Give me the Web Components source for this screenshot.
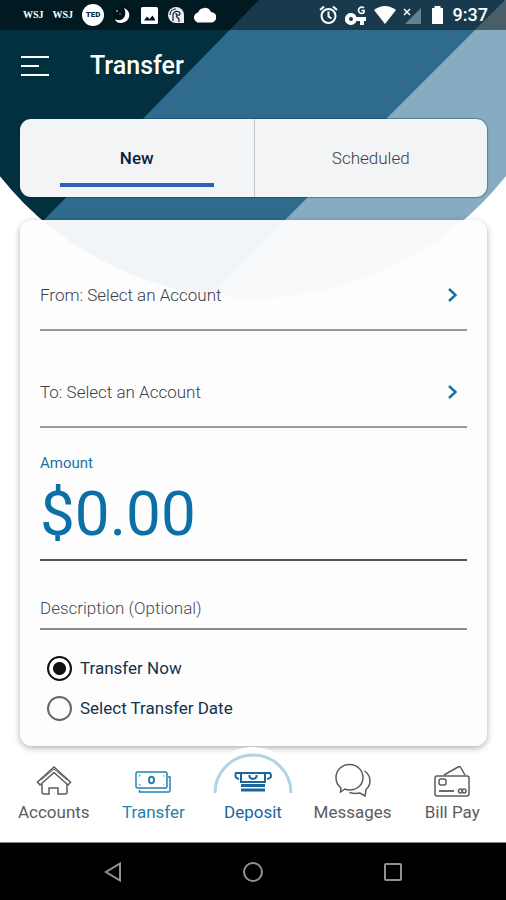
<!DOCTYPE html>
<html lang="en">
<head>
<meta charset="utf-8">
<meta name="viewport" content="width=device-width, initial-scale=1">
<title>Transfer</title>
<style>
html,body{margin:0;min-height:100%}
body{font-family:Roboto,"Liberation Sans",sans-serif;background:#fff;color:#12283c}
</style>
</head>
<body>
<bank-screen>
  <phone-status slot="status" time="9:37"></phone-status>
  <app-header slot="header">Transfer</app-header>
  <transfer-tabs></transfer-tabs>
  <transfer-card></transfer-card>
  <bank-nav slot="nav"></bank-nav>
  <system-nav slot="system"></system-nav>
</bank-screen>
<script>
const define = (name, html) => customElements.define(name, class extends HTMLElement {
  constructor() {
    super();
    const t = document.createElement('template');
    t.innerHTML = '<style>:host,*{box-sizing:border-box}button,input{font:inherit;color:inherit;margin:0;padding:0;border:0;background:none;border-radius:0}svg{display:block;flex:none}</style>' + html;
    this.attachShadow({ mode: 'open' }).append(t.content.cloneNode(true));
    for (const n of this.shadowRoot.querySelectorAll('[data-attr]')) n.textContent = this.getAttribute(n.dataset.attr);
  }
});

define('bank-screen', `
<style>
:host{display:grid;min-height:100vh}
.backdrop,.page{grid-area:1/1;min-width:0}
.backdrop{width:100%;height:299px}
.page{display:flex;flex-direction:column;z-index:1}
main{flex:1;padding:0 19px;display:flex;flex-direction:column;gap:23px}
</style>
<svg class="backdrop" viewBox="0 0 506 299" preserveAspectRatio="none" aria-hidden="true">
  <defs><clipPath id="arc"><path d="M0 0H506V176A323 323 0 0 1 0 176Z"/></clipPath></defs>
  <g clip-path="url(#arc)">
    <rect width="506" height="299" fill="#87abc1"/>
    <path d="M0 0H505L206 299H0Z" fill="#2e6b8d"/>
    <path d="M0 0H259L-40 306H0Z" fill="#02303f"/>
  </g>
</svg>
<div class="page">
  <slot name="status"></slot><slot name="header"></slot>
  <main><slot></slot></main>
  <slot name="nav"></slot><slot name="system"></slot>
</div>`);

define('phone-status', `
<style>
:host{display:flex;justify-content:space-between;align-items:center;height:30px;padding:0 18px 0 23px;background:rgba(0,0,0,.45);color:#fff}
.set{display:flex;align-items:center;gap:9px}
.right{gap:7px}
.wsj{font:bold 10px/16px "Liberation Serif",serif}
.ted{width:22px;height:22px;border-radius:50%;background:#fff;color:#02303f;font:900 8px/22px Roboto,sans-serif;text-align:center}
.time{font-size:18px;font-weight:500;line-height:22px}
</style>
<div class="set">
  <span class="wsj">WSJ</span><span class="wsj">WSJ</span><span class="ted">TED</span>
  <svg width="19" height="20" viewBox="0 0 19 20"><circle cx="9" cy="10" r="8.5" fill="#021119"/><path d="M11 3C19 6 18 17 8 18 5 18 3 17 2 14 9 18 15 11 11 3Z" fill="#fff"/><circle cx="4" cy="6" r="1" fill="#9ab"/><circle cx="7" cy="9" r=".7" fill="#9ab"/></svg>
  <svg width="17" height="17" viewBox="0 0 17 17"><rect width="17" height="17" rx="1.5" fill="#fff"/><path d="M3 13.5 6 9.500 8.500 12 11.500 8.500 14.500 13.500Z" fill="#021119"/></svg>
  <svg width="18" height="18" viewBox="0 0 18 18"><path d="M9 1A8 8 0 0 1 17 9V17H9A8 8 0 0 1 9 1Z" fill="#e9edef"/><path d="M6 15V8A4 4 0 0 1 13 7C13 10 9 10 9 7M9 10 12 13V16M3 9C3 5 6 3 9 3" fill="none" stroke="#06202b" stroke-width="1.200"/></svg>
  <svg width="22" height="16" viewBox="0 0 22 16"><path d="M6 15.500A5 5 0 0 1 4 5.600 7 7 0 0 1 17 5 5.200 5.200 0 0 1 17 15.500Z" fill="#fff"/></svg>
</div>
<div class="set right">
  <svg width="19" height="20" viewBox="0 0 19 20" fill="none" stroke="#fff" stroke-width="2"><circle cx="9.500" cy="11" r="7"/><path d="M1 5 5 1.500M18 5 14 1.500M9.500 6.500V11.500L12.500 13.500"/></svg>
  <svg width="22" height="21" viewBox="0 0 22 21"><path fill-rule="evenodd" d="M6 8A6 6 0 1 0 11.500 16H15V20H19V16H21V12H11.500A6 6 0 0 0 6 8ZM6 12A2 2 0 1 1 6 16 2 2 0 0 1 6 12Z" fill="#fff"/><path d="M19 3A3.200 3.200 0 1 0 19 7.500V5.500H16.500" fill="none" stroke="#fff" stroke-width="1.700"/></svg>
  <svg width="22" height="18" viewBox="0 0 22 18"><path d="M0 4Q11-4 22 4L11 18Z" fill="#fff"/></svg>
  <svg width="19" height="19" viewBox="0 0 19 19"><path d="M18 2V18H2Z" fill="#66818e"/><path d="M1 3 7 9M7 3 1 9" stroke="#fff" stroke-width="1.500"/></svg>
  <svg width="17" height="20" viewBox="0 0 17 20"><path d="M5.500 1H11.500V3H14V19H3V3H5.500Z" fill="#fff"/></svg>
  <span class="time" data-attr="time"></span>
</div>`);

define('app-header', `
<style>
:host{display:flex;align-items:center;gap:41px;height:89px;padding:0 21px 18px;color:#fff}
button{display:block;cursor:pointer}
h1{margin:0;font-size:25px;line-height:32px;font-weight:500}
</style>
<button aria-label="Open menu"><svg width="28" height="22" viewBox="0 0 28 22" stroke="#fff" stroke-width="2"><path d="M0 2H28M0 11H18M0 20H28"/></svg></button>
<h1><slot></slot></h1>`);

define('transfer-tabs', `
<style>
:host{display:grid;grid-template-columns:1fr 1fr;height:78px;margin-left:1px;border-radius:11px;background:#f3f4f6;overflow:hidden;box-shadow:0 0 1px 1px rgba(0,45,75,.35)}
button{display:flex;flex-direction:column;align-items:center;justify-content:center;font-size:17px;line-height:22px;font-weight:300;color:#38424c;cursor:pointer}
button+button{border-left:1px solid #c4c7ca}
[aria-selected=true]{font-weight:500;color:#0b1c36}
[aria-selected=true] span{padding-top:18px}
[aria-selected=true]::after{content:"";width:66%;height:4px;margin-top:14px;background:#2a62b8}
</style>
<button role="tab" aria-selected="true"><span>New</span></button>
<button role="tab" aria-selected="false">Scheduled</button>`);

define('account-row', `
<style>
:host{display:block}
button{display:flex;align-items:center;justify-content:space-between;width:100%;height:71px;padding-right:9px;border-bottom:2px solid #999;font-size:17px;font-weight:300;line-height:22px;color:#3b4148;cursor:pointer}
</style>
<button><slot></slot><svg width="11" height="16" viewBox="0 0 11 16" fill="none" stroke="#1b6ea3" stroke-width="2.400"><path d="M2 2 8.500 8 2 14"/></svg></button>`);

define('transfer-card', `
<style>
:host{display:flex;flex-direction:column;gap:26px;margin-left:1px;padding:40px 20px 18px;border-radius:12px;background:rgba(253,253,254,.95);box-shadow:0 2px 6px rgba(0,0,0,.32)}
.amount{display:flex;flex-direction:column}
label{cursor:pointer}
.amount label{font-size:15px;line-height:18px;color:#1a73a5}
input{display:block;width:100%;min-width:0;outline:0}
.amount input{height:89px;padding-bottom:4px;border-bottom:2px solid #55555f;font-size:62px;color:#0b70a5}
#desc{height:43px;border-bottom:2px solid #8b8b8b;font-size:17px;font-weight:300}
#desc::placeholder{color:#454b52;opacity:1}
fieldset{display:block;margin:-8px 0 0;padding:0;border:0;min-width:0}
fieldset label{display:flex;align-items:center;gap:8px;height:40px;padding-left:7px;font-size:17px;line-height:22px;color:#12334c}
fieldset input{appearance:none;flex:none;width:25px;height:25px;border:2px solid #666;border-radius:50%}
fieldset input:checked{border-color:#111;background:radial-gradient(circle,#111 6px,transparent 7px)}
</style>
<account-row>From: Select an Account</account-row>
<account-row>To: Select an Account</account-row>
<div class="amount"><label for="amt">Amount</label><input id="amt" value="$0.00" inputmode="decimal"></div>
<input id="desc" aria-label="Description (Optional)" placeholder="Description (Optional)">
<fieldset aria-label="Transfer timing">
  <label><input type="radio" name="when" checked>Transfer Now</label>
  <label><input type="radio" name="when">Select Transfer Date</label>
</fieldset>`);

define('nav-item', `
<style>
:host{display:block;color:#5b5c5f}
:host([tone=active]){color:#2682ae}
:host([tone=deposit]){color:#1966a0}
a{display:flex;flex-direction:column;align-items:center;height:100%;color:inherit;text-decoration:none;font-size:17px;line-height:22px;white-space:nowrap}
.icon{display:flex;align-items:center;justify-content:center;width:96px;height:54px}
:host([tone=deposit]) .icon{border-radius:48px 48px 0 0;background:#fff}
</style>
<a href="#"><span class="icon"><slot name="icon"></slot></span><slot></slot></a>`);

define('bank-nav', `
<style>
:host{display:grid;grid-template-columns:repeat(5,1fr);height:96px;padding:1px 4px 0}
svg{fill:none;stroke:currentColor;stroke-width:1.500;overflow:visible}
</style>
<nav-item><svg slot="icon" width="36" height="52" viewBox="0 0 36 52"><path d="M1.500 34 18 19 34.500 34 32 37 18 24.500 4 37Z"/><path d="M5 32 18 21 31 32" stroke-width="1"/><path d="M6 36V44Q6 46 8 46H13V40H22V46H29Q31 46 31 44V36"/></svg>Accounts</nav-item>
<nav-item tone="active"><svg slot="icon" width="36" height="52" viewBox="0 0 36 52"><rect x="1" y="24" width="31" height="16" rx="1.500"/><ellipse cx="16.500" cy="32" rx="2.500" ry="3.300" stroke-width="2"/><path d="M4.500 42V44H33.500Q35 44 35 42.500V29H33"/><path d="M4 29V27H6M29 27V29M4 36V37H6M29 36V37" stroke-width=".6"/></svg>Transfer</nav-item>
<nav-item tone="deposit"><svg slot="icon" width="80" height="54" viewBox="0 0 80 54"><path d="M2 46A38 38 0 0 1 78 46" stroke="#b2d3e4" stroke-width="3"/><path d="M26 32Q21 31 23 26H57Q60 31 54 32" stroke-width="2"/><path d="M28 26V35H52V26M36.500 28V30Q40 34 43.500 30V28" stroke-width="2"/><path d="M28 38.500H52M28 43H52" stroke-width="3"/></svg>Deposit</nav-item>
<nav-item><svg slot="icon" width="36" height="52" viewBox="0 0 36 52"><path d="M6 40Q1 36 1 29.500C1 22 7 16.500 14.500 16.500S28 22 28 29.500 22 42 14.500 42Q12 42 10 41L5.500 44Z"/><path d="M29.500 23Q35 27 35 33 35 38 31 41.500L30 48 25 45Q19 46 14.500 44.500"/></svg>Messages</nav-item>
<nav-item><svg slot="icon" width="36" height="52" viewBox="0 0 36 52"><rect x="1" y="28" width="34" height="20" rx="2"/><path d="M10 27 24 19Q26 18 27 20L31 27"/><rect x="5" y="31" width="7" height="6" rx="2"/><path d="M5 43H20" stroke-width="1.800"/><circle cx="26.500" cy="43" r="2"/><circle cx="30" cy="43" r="2"/></svg>Bill Pay</nav-item>`);

define('system-nav', `
<style>
:host{display:grid;grid-template-columns:repeat(3,1fr);height:58px;padding:0 43px;background:#000;border-top:1px solid #888}
button{display:flex;align-items:center;justify-content:center;cursor:pointer}
svg{fill:none;stroke:#929292;stroke-width:2}
</style>
<button aria-label="Back"><svg width="18" height="20" viewBox="0 0 18 20"><path d="M16 1.500V18.500L2 10Z"/></svg></button>
<button aria-label="Home"><svg width="20" height="20" viewBox="0 0 20 20"><circle cx="10" cy="10" r="9"/></svg></button>
<button aria-label="Recent apps"><svg width="18" height="18" viewBox="0 0 18 18"><rect x="1" y="1" width="16" height="16" rx="1"/></svg></button>`);
</script>
</body>
</html>
